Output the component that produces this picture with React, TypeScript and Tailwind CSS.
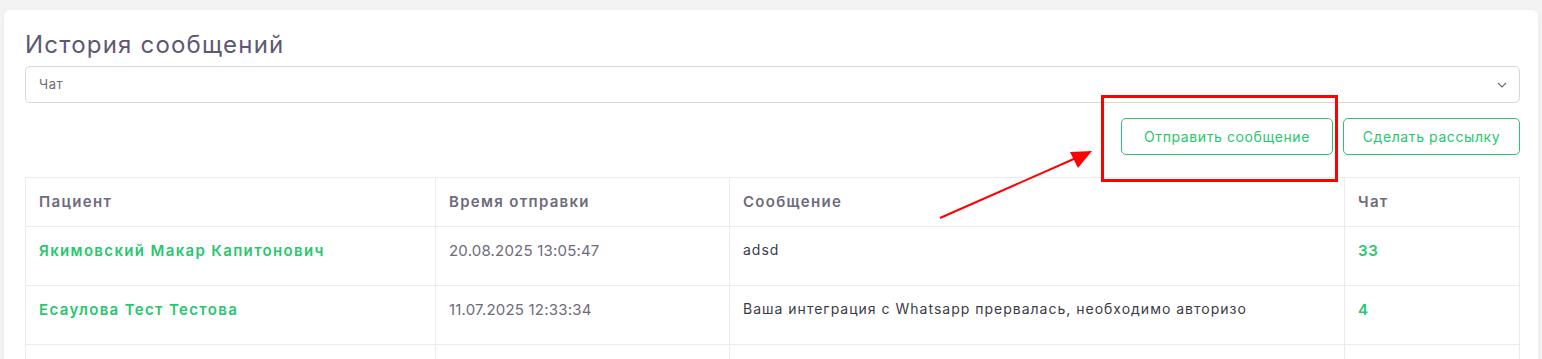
const rows = [
  { name: "Якимовский Макар Капитонович", time: "20.08.2025 13:05:47", text: "adsd", chat: "33" },
  {
    name: "Есаулова Тест Тестова",
    time: "11.07.2025 12:33:34",
    text: "Ваша интеграция с Whatsapp прервалась, необходимо авторизо",
    chat: "4",
  },
  { name: "", time: "", text: "", chat: "" },
]

export default function App() {
  return (
    <div className="min-h-screen bg-[#f3f3f3] pt-[10px] pl-[4px] pr-[4px] font-['Inter',sans-serif] overflow-hidden">
      <div className="relative bg-white rounded-md shadow-[0_2px_8px_rgba(0,0,0,0.04)] pt-[20px] pl-[21px] pr-[18px] pb-6 min-h-[400px]">
        {/* Title */}
        <h2 className="text-[24px] leading-[30px] text-[#5e5873] mb-[6px] tracking-[1.2px]">История сообщений</h2>

        {/* Chat select */}
        <div className="h-[37px] border border-[#d8d6de] rounded-[5px] flex items-center justify-between pl-[13px] pr-[12px]">
          <span className="text-[13px] text-[#6e6b7b] tracking-[0.6px]">Чат</span>
          <svg width="10" height="6" viewBox="0 0 10 6" fill="none">
            <path d="M1 1l4 4 4-4" stroke="#6e6b7b" strokeWidth="1.2" />
          </svg>
        </div>

        {/* Actions */}
        <div className="flex justify-end gap-[10px] mt-[15px] tracking-[0.6px]">
          <button className="h-[37px] w-[212px] border border-[#28c76f] rounded-[5px] text-[14px] text-[#28c76f]">
            Отправить сообщение
          </button>
          <button className="h-[37px] w-[177px] border border-[#28c76f] rounded-[5px] text-[14px] text-[#28c76f]">
            Сделать рассылку
          </button>
        </div>

        {/* Table */}
        <table className="w-full table-fixed border-collapse mt-[22px]">
          <colgroup>
            <col className="w-[410px]" />
            <col className="w-[294px]" />
            <col className="w-[615px]" />
            <col />
          </colgroup>
          <thead>
            <tr className="h-[49px]">
              {["Пациент", "Время отправки", "Сообщение", "Чат"].map((h) => (
                <th
                  key={h}
                  className="border border-[#ebe9f1] px-[13px] text-left text-[15px] font-semibold text-[#6e6b7b] tracking-[1.3px]"
                >
                  {h}
                </th>
              ))}
            </tr>
          </thead>
          <tbody>
            {rows.map((r, i) => (
              <tr key={i} className="h-[59px] align-top">
                <td className="border border-[#ebe9f1] px-[13px] pt-[13px] text-[15px] font-semibold text-[#28c76f] tracking-[1.35px]">
                  {r.name}
                </td>
                <td className="border border-[#ebe9f1] px-[13px] pt-[13px] text-[15px] text-[#6e6b7b] tracking-[0.2px]">
                  {r.time}
                </td>
                <td className="border border-[#ebe9f1] px-[13px] pt-[12px] text-[14px] text-[#3b3b45] tracking-[1px]">
                  <div className="whitespace-nowrap">{r.text}</div>
                </td>
                <td className="border border-[#ebe9f1] px-[13px] pt-[13px] text-[15px] font-semibold text-[#28c76f] tracking-[0.6px]">
                  {r.chat}
                </td>
              </tr>
            ))}
          </tbody>
        </table>

        {/* Annotation: red frame */}
        <div className="absolute left-[1097px] top-[85px] w-[237px] h-[87px] border-[3px] border-[#ff0000]" />

        {/* Annotation: arrow */}
        <svg className="absolute left-[920px] top-[130px]" width="180" height="100" viewBox="0 0 180 100">
          <line x1="16" y1="78" x2="152" y2="18" stroke="#ff0000" strokeWidth="2" />
          <polygon points="168,11 146,12 154,28" fill="#ff0000" />
        </svg>
      </div>
    </div>
  )
}
